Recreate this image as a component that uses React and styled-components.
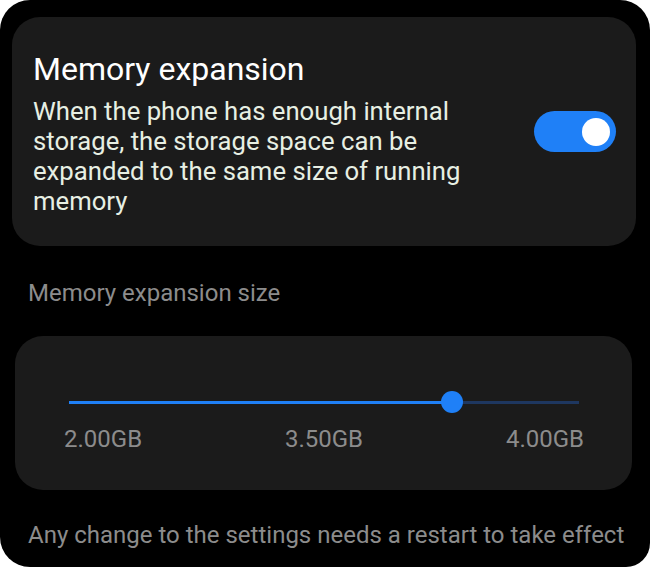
import { createGlobalStyle } from 'styled-components';
import styled from 'styled-components';

const GlobalStyle = createGlobalStyle`
    body {
        margin: 0;
        background: #ffffff;
        font-family: Roboto, "Noto Sans", sans-serif;
    }
`;

const Frame = styled.div`
    width: 650px;
    height: 567px;
    box-sizing: border-box;
    background: #000;
    border-radius: 30px 30px 24px 30px;
    padding: 17px 14px 0 12px;
    overflow: hidden;
`;

const Card = styled.div`
    background: #1b1b1b;
    border-radius: 28px;
`;

const ToggleCard = styled(Card)`
    display: flex;
    align-items: center;
    justify-content: space-between;
    height: 229px;
    box-sizing: border-box;
    padding: 0 20px 0 21px;
`;

const TextBlock = styled.div`
    width: 470px;
    margin-top: 3px;
`;

const Title = styled.div`
    font-size: 32px;
    line-height: 38px;
    color: #ffffff;
`;

const Desc = styled.div`
    margin-top: 8px;
    font-size: 25.7px;
    line-height: 30px;
    color: #e7efe3;
`;

const Switch = styled.div`
    width: 82px;
    height: 41px;
    border-radius: 21px;
    background: ${(p) => (p.$on ? '#1f80f7' : '#555')};
    display: flex;
    align-items: center;
    justify-content: ${(p) => (p.$on ? 'flex-end' : 'flex-start')};
    padding: 0 6px;
    box-sizing: border-box;
`;

const Knob = styled.div`
    width: 28px;
    height: 28px;
    border-radius: 50%;
    background: #fff;
`;

const SectionLabel = styled.div`
    margin: 33px 0 0 16px;
    font-size: 24px;
    line-height: 28px;
    color: #8c8c8c;
`;

const SliderCard = styled(Card)`
    margin: 29px 4px 0 3px;
    height: 154px;
    box-sizing: border-box;
    padding: 55px 48px 0 49px;
`;

const Track = styled.div`
    position: relative;
    margin: 0 5px;
    height: 22px;
    display: flex;
    align-items: center;
`;

const Rail = styled.div`
    width: 100%;
    height: 3px;
    background: #1e3760;
    position: relative;
`;

const Fill = styled.div`
    height: 100%;
    background: #1f80f7;
`;

const Thumb = styled.div`
    position: absolute;
    top: 0;
    width: 22px;
    height: 22px;
    margin-left: -11px;
    border-radius: 50%;
    background: #1f80f7;
`;

const Ticks = styled.div`
    margin-top: 12px;
    display: flex;
    justify-content: space-between;
    font-size: 24px;
    line-height: 28px;
    color: #8c8c8c;
`;

const Footer = styled.div`
    margin: 31px 0 0 16px;
    font-size: 24px;
    line-height: 28px;
    color: #8c8c8c;
    white-space: nowrap;
`;

const App = () => {
    const pct = 75.1;

    return (
        <>
            <GlobalStyle />
            <Frame>
                <ToggleCard>
                    <TextBlock>
                        <Title>Memory expansion</Title>
                        <Desc>
                            When the phone has enough internal storage, the storage space can be expanded to the same size of running memory
                        </Desc>
                    </TextBlock>
                    <Switch $on>
                        <Knob />
                    </Switch>
                </ToggleCard>

                <SectionLabel>Memory expansion size</SectionLabel>

                <SliderCard>
                    <Track>
                        <Rail>
                            <Fill style={{ width: `${pct}%` }} />
                        </Rail>
                        <Thumb style={{ left: `${pct}%` }} />
                    </Track>
                    <Ticks>
                        <span>2.00GB</span>
                        <span>3.50GB</span>
                        <span>4.00GB</span>
                    </Ticks>
                </SliderCard>

                <Footer>Any change to the settings needs a restart to take effect</Footer>
            </Frame>
        </>
    );
};

export default App;
